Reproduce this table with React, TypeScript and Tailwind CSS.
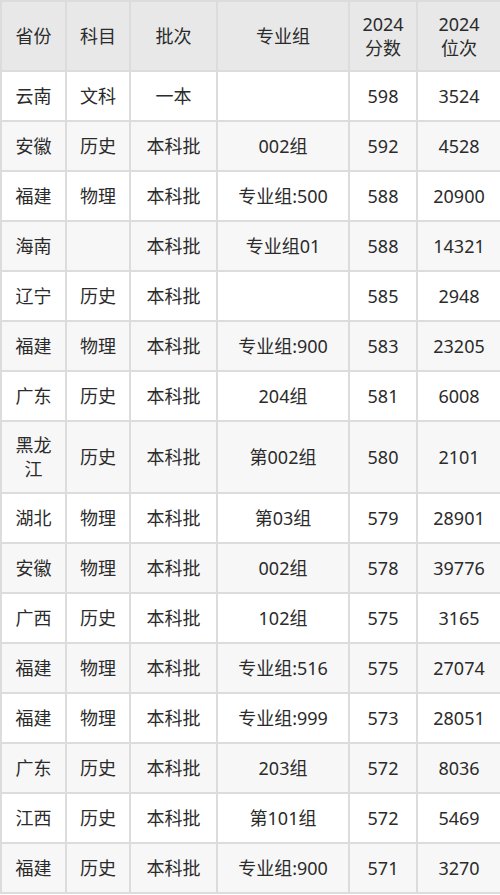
import React from "react";

const rows: [string, string, string, string, string, string][] = [
  ["云南", "文科", "一本", "", "598", "3524"],
  ["安徽", "历史", "本科批", "002组", "592", "4528"],
  ["福建", "物理", "本科批", "专业组:500", "588", "20900"],
  ["海南", "", "本科批", "专业组01", "588", "14321"],
  ["辽宁", "历史", "本科批", "", "585", "2948"],
  ["福建", "物理", "本科批", "专业组:900", "583", "23205"],
  ["广东", "历史", "本科批", "204组", "581", "6008"],
  ["黑龙江", "历史", "本科批", "第002组", "580", "2101"],
  ["湖北", "物理", "本科批", "第03组", "579", "28901"],
  ["安徽", "物理", "本科批", "002组", "578", "39776"],
  ["广西", "历史", "本科批", "102组", "575", "3165"],
  ["福建", "物理", "本科批", "专业组:516", "575", "27074"],
  ["福建", "物理", "本科批", "专业组:999", "573", "28051"],
  ["广东", "历史", "本科批", "203组", "572", "8036"],
  ["江西", "历史", "本科批", "第101组", "572", "5469"],
  ["福建", "历史", "本科批", "专业组:900", "571", "3270"],
];

export default function App() {
  return (
    <div
      className="w-[500px] h-[895px] bg-white text-[#2b2b2b] overflow-hidden"
      style={{ fontFamily: '"Noto Sans", "Noto Sans CJK SC", sans-serif' }}
    >
      <table className="w-[500px] border-collapse table-fixed text-[18px] leading-[24px]">
        <colgroup>
          <col className="w-[65px]" />
          <col className="w-[64px]" />
          <col className="w-[87px]" />
          <col className="w-[132px]" />
          <col className="w-[68px]" />
          <col className="w-[84px]" />
        </colgroup>
        <thead>
          <tr className="bg-[#e8e8e8] h-[70px]">
            {["省份", "科目", "批次", "专业组"].map((h) => (
              <th key={h} className="border-2 border-[#dcdcdc] font-normal text-center align-middle p-0">
                {h}
              </th>
            ))}
            <th className="border-2 border-[#dcdcdc] font-normal text-center align-middle p-0">
              2024
              <br />
              分数
            </th>
            <th className="border-2 border-[#dcdcdc] font-normal text-center align-middle p-0">
              2024
              <br />
              位次
            </th>
          </tr>
        </thead>
        <tbody>
          {rows.map((r, i) => (
            <tr
              key={i}
              className={`${i % 2 === 1 ? "bg-[#f7f7f7]" : "bg-white"} ${r[0].length > 2 ? "h-[72px]" : "h-[50px]"}`}
            >
              {r.map((c, j) => (
                <td
                  key={j}
                  className={
                    j === 0
                      ? "border-2 border-[#dcdcdc] text-center align-middle py-0 px-[12px]"
                      : "border-2 border-[#dcdcdc] text-center align-middle p-0"
                  }
                >
                  {c}
                </td>
              ))}
            </tr>
          ))}
        </tbody>
      </table>
    </div>
  );
}
